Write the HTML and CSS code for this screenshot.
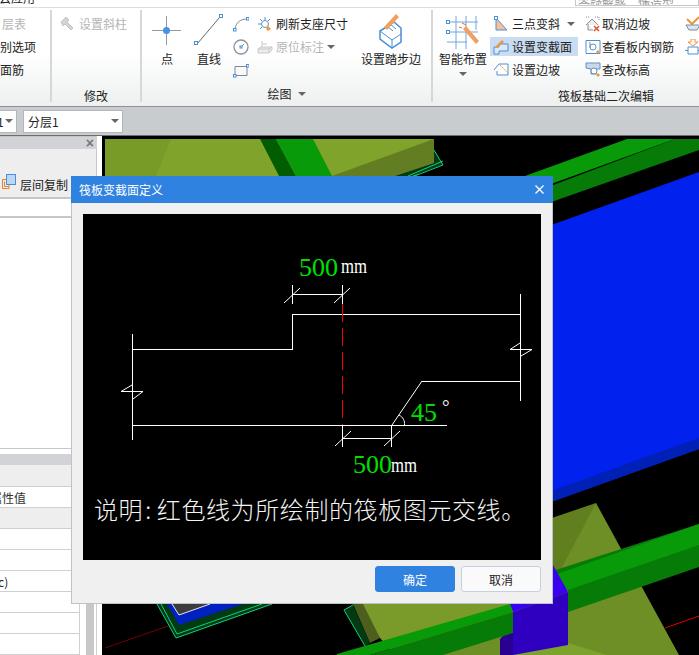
FILE: index.html
```html
<!DOCTYPE html>
<html lang="zh">
<head>
<meta charset="utf-8">
<title>筏板变截面定义</title>
<link rel="stylesheet" href="styles.css">
</head>
<body>
<div class="strip">
  <span class="app-name">云应用</span>
  <span class="search">答疑解惑，懂造型</span>
</div>

<div class="ribbon">
  <section class="group g1">
    <div class="rows">
      <div class="row off"><span>层表</span></div>
      <div class="row"><span class="cut">识别选项</span></div>
      <div class="row"><span>面筋</span></div>
    </div>
    <div class="cap">&nbsp;</div>
  </section>

  <section class="group g2">
    <div class="rows">
      <div class="row off">
        <svg class="ic" viewBox="0 0 16 16"><path d="M1 6 6 1l3 3-2 2 6 6-2 2-6-6-2 2z" fill="#d4d4d4" stroke="#c4c4c4"/></svg>
        <span>设置斜柱</span>
      </div>
    </div>
    <div class="cap">修改</div>
  </section>

  <section class="group g3">
    <div class="body">
      <div class="big b-point">
        <svg class="bigic" viewBox="0 0 30 38"><path d="M0 18.500h29M14.500 4v29" stroke="#8b9aa6" fill="none"/><circle cx="14.500" cy="18.500" r="3.500" fill="#4a90e2"/></svg>
        <span>点</span>
      </div>
      <div class="big b-line">
        <svg class="bigic" viewBox="0 0 30 38"><path d="M3.500 31.500 25.500 5.500" stroke="#5c6a75" fill="none"/><rect x="0.500" y="29.500" width="3" height="3" fill="#fff" stroke="#4a90d9"/><rect x="25.500" y="2.500" width="3" height="3" fill="#fff" stroke="#4a90d9"/></svg>
        <span>直线</span>
      </div>
      <div class="rows shapes">
        <div class="row"><svg class="ic" viewBox="0 0 16 16"><path d="M2 13C3 6 8 3 14 3" stroke="#7c8a96" fill="none"/><rect x="0.500" y="12.500" width="2.500" height="2.500" fill="#fff" stroke="#4a90d9"/><rect x="13.500" y="1.500" width="2.500" height="2.500" fill="#fff" stroke="#4a90d9"/></svg></div>
        <div class="row"><svg class="ic" viewBox="0 0 16 16"><circle cx="8" cy="8" r="7" fill="none" stroke="#8a949c" stroke-width="1.300"/><path d="M8 8 11 5" stroke="#8a949c"/><rect x="7" y="7" width="2" height="2" fill="#fff" stroke="#4a90d9"/></svg></div>
        <div class="row"><svg class="ic" viewBox="0 0 16 16"><path d="M2 4.500h12v9H2z" fill="none" stroke="#7c8a96"/><rect x="0.500" y="12.500" width="2.500" height="2.500" fill="#fff" stroke="#4a90d9"/><rect x="13.500" y="2.500" width="2.500" height="2.500" fill="#fff" stroke="#4a90d9"/></svg></div>
      </div>
      <div class="rows refresh">
        <div class="row"><svg class="ic" viewBox="0 0 16 16"><path d="M8 1v3M1 8h3M3 3l2 2M13 3l-2 2M3 13l2-2" stroke="#4a90d9" fill="none"/><circle cx="8" cy="8" r="3.500" fill="#fff" stroke="#6a8fb5"/><path d="M11 10l3 3-3 2-2-2z" fill="#f0953a"/></svg><span>刷新支座尺寸</span></div>
        <div class="row off"><svg class="ic" viewBox="0 0 16 16"><path d="M1 10l3-2h11v3l-3 3H1zM1 10h11v4M12 10l3-2M5 8V2M5 5h5" fill="#ececec" stroke="#c8c8c8"/></svg><span>原位标注</span><i class="tri"></i></div>
        <div class="row"></div>
      </div>
      <div class="big b-stair">
        <svg class="bigic" viewBox="0 0 30 38"><path d="M4 19 18 10l7 6v14l-9 6-12-9z" fill="#fff" stroke="#4a90d9" stroke-width="1.500"/><path d="M4 19l12 9v8M16 28l9-6M11 14l6 5M14 12l6 5" fill="none" stroke="#4a90d9"/><path d="M8 15 20 2l3 3-12 13z" fill="#f0a060"/></svg>
        <span>设置踏步边</span>
      </div>
    </div>
    <div class="cap cap-menu">绘图<i class="tri"></i></div>
  </section>

  <section class="group g4">
    <div class="body">
      <div class="big b-smart">
        <svg class="bigic" viewBox="0 0 34 38"><path d="M1 10h31M1 20h31M1 30h20M10 4v33M20 4v33M30 4v14" stroke="#6ea6e0" fill="none"/><rect x="0.500" y="8.500" width="3" height="3" fill="#fff" stroke="#4a90d9"/><rect x="0.500" y="18.500" width="3" height="3" fill="#fff" stroke="#4a90d9"/><path d="M17 17l3-3 13 15-3 3z" fill="#f0a060"/><path d="M16 11l4 2M13 15l3 1" stroke="#e0701f"/></svg>
        <span>智能布置</span>
        <i class="tri"></i>
      </div>
      <div class="rows edit">
        <div class="row"><svg class="ic" viewBox="0 0 16 16"><path d="M3 2v12h11z" fill="#f6c09a" stroke="#4a90d9"/><rect x="1.500" y="0.500" width="3" height="3" fill="#fff" stroke="#4a90d9"/></svg><span>三点变斜</span><i class="tri"></i></div>
        <div class="row sel"><svg class="ic" viewBox="0 0 16 16"><path d="M1 15V8h5V5h9v7H6v3z" fill="#dce8f5" stroke="#4a90d9"/><path d="M2 8 9 1l2 2-7 6z" fill="#f0953a"/></svg><span>设置变截面</span></div>
        <div class="row"><svg class="ic" viewBox="0 0 16 16"><path d="M1 8l5-6h9v11H4V9" fill="#fff" stroke="#4a90d9"/><path d="M7 3l8 8" stroke="#f0953a" stroke-dasharray="2 1"/></svg><span>设置边坡</span></div>
      </div>
      <div class="rows check">
        <div class="row"><svg class="ic" viewBox="0 0 16 16"><path d="M1 9l6-6 6 6M3 8v6h5" fill="#eee" stroke="#8a949c"/><path d="M1 1h3M10 1h4v3" stroke="#8a949c" stroke-dasharray="1 1" fill="none"/><path d="M9 10l5 5M14 10l-5 5" stroke="#e0533a" stroke-width="1.600"/></svg><span>取消边坡</span></div>
        <div class="row"><svg class="ic" viewBox="0 0 16 16"><path d="M1 1.500h14v13H1z" fill="#fff" stroke="#4a90d9"/><circle cx="8" cy="8" r="3" fill="none" stroke="#6a8fb5"/><path d="M5 3v6" stroke="#6a8fb5"/><path d="M13 11l2 2-2 2-2-2z" fill="#f0953a"/></svg><span>查看板内钢筋</span></div>
        <div class="row"><svg class="ic" viewBox="0 0 16 16"><path d="M1 1h14v6H11v5H6V7L1 6z" fill="#c9d9ea" stroke="#5f93c9"/><circle cx="9" cy="9" r="3" fill="#fff" stroke="#6a8fb5"/><path d="M13 11l2 2-2 2-2-2z" fill="#f0953a"/></svg><span>查改标高</span></div>
      </div>
      <div class="rows extra">
        <div class="row"><svg class="ic" viewBox="0 0 16 16"><path d="M2 3l5 5 7-7" fill="none" stroke="#f0953a" stroke-width="2"/><path d="M1 9h14l-3 5H4z" fill="#dde6f0" stroke="#7a8a9a"/></svg></div>
        <div class="row"><svg class="ic" viewBox="0 0 16 16"><path d="M6 0h4v3h3l-5 4-5-4h3z" fill="#fff" stroke="#f0953a"/><path d="M3 8h10v7H3zM0 11.500h3M13 11.500h3" fill="none" stroke="#4a90d9"/></svg></div>
        <div class="row"></div>
      </div>
    </div>
    <div class="cap">筏板基础二次编辑</div>
  </section>
</div>

<div class="toolbar">
  <div class="combo c-floor"><span>1</span><i class="tri"></i></div>
  <div class="combo c-layer"><span>分层1</span><i class="tri"></i></div>
</div>

<main class="main">
  <aside class="side">
    <div class="pane-head"><span class="x">×</span></div>
    <div class="tools">
      <svg class="copy" viewBox="0 0 16 16"><path d="M5 5.500H1.500v9H8V11M3.500 7.500v5H8" fill="none" stroke="#e8832a"/><rect x="5.500" y="0.500" width="9" height="10" fill="#bcd6f7" stroke="#4a90d9"/></svg>
      <span>层间复制</span>
    </div>
    <div class="tree-row"></div>
    <div class="tree-fill"></div>
    <div class="pane-head low"></div>
    <div class="prop shade"></div>
    <div class="prop"><span class="cut-prop">属性值</span></div>
    <div class="prop shade thin"></div>
    <div class="prop"></div>
    <div class="prop"></div>
    <div class="prop"><span class="cut-c">(c)</span></div>
    <div class="prop"></div>
    <div class="prop"></div>
    <div class="prop"></div>
    <div class="scroll"></div>
  </aside>

  <div class="canvas">
    <svg class="scene" viewBox="102 136 597 519" preserveAspectRatio="none">
      <rect x="102" y="136" width="597" height="519" fill="#000"/>
      <path d="M105 139H434V163L395 190H105z" fill="#80a32c"/>
      <path d="M105 139H171L156 176V200H105z" fill="#789b28"/>
      <path d="M332 176 434 139V163L395 176z" fill="#627d22"/>
      <path d="M260 139H276L296 176H279z" fill="#025c02"/>
      <path d="M276 139H313L332 176H296z" fill="#089a08"/>
      <path d="M395 176 434 163 434 150 443 165 412 176z" fill="#023a12"/>
      <path d="M434 150 443 165 412 177" fill="none" stroke="#10d080"/>
      <path d="M443 161 408 176" fill="none" stroke="#10d080"/>

      <path d="M675 139H699V150L540 206V190z" fill="#077b07"/>
      <path d="M627 139H675L540 188 525 176z" fill="#089a08"/>

      <path d="M540 229 699 172V449L540 506z" fill="#0021ee"/>
      <path d="M540 495 699 438V449L540 506z" fill="#0020b6"/>

      <path d="M596 503 679 655H440L500 604 540 540z" fill="#6e8f25"/>
      <path d="M596 503 540 522V590L557 577z" fill="#627f20"/>
      <path d="M568 643 607 655H510z" fill="#7da32c"/>
      <path d="M353 604H510L513 612 375 655H395L380 638z" fill="#7a9a2a"/>
      <path d="M353 604H363L380 638 370 643z" fill="#4e5e1e"/>
      <path d="M344 610 353 605 370 643 365 646z" fill="#023a12"/>
      <path d="M353 605 344 610 365 646" fill="none" stroke="#10d080"/>
      <path d="M665 628 699 616" stroke="#e00000" fill="none"/>

      <path d="M699 524V567L568 612V590L540 580V575z" fill="#077b07"/>
      <path d="M699 524V545L568 590 553 578 560 573z" fill="#089a08"/>

      <path d="M510 604 553 565 568 592 513 612z" fill="#3a00f0"/>
      <path d="M513 612 568 592V645L513 655z" fill="#3000c0"/>
      <path d="M500 639 513 625V655H500z" fill="#2a0090"/>

      <path d="M337 654 510 604 513 612 370 655H337z" fill="#089a08"/>
      <path d="M370 655 513 612V633L443 655z" fill="#077b07"/>

      <path d="M157 604 176 638 272 604z" fill="#023a12"/>
      <path d="M157 604 176 638 272 604" fill="none" stroke="#10d080"/>
      <path d="M161 604 177 634 262 604" fill="none" stroke="#10d080"/>
      <path d="M167 604 179 625 243 604z" fill="#0020c0"/>
      <path d="M172 604 179 615 210 604z" fill="#3c3c3c"/>
      <path d="M172 604 179 615 210 604" fill="none" stroke="#e8e8e8"/>
      <path d="M105 648 168 626" stroke="#780000" fill="none"/>
    </svg>
  </div>
</main>

<div class="dialog">
  <header class="dlg-title">
    <span>筏板变截面定义</span>
    <svg class="dlg-x" viewBox="0 0 9 9"><path d="M.5.500l8 8M8.500.500l-8 8" stroke="#fff" stroke-width="1.300" fill="none"/></svg>
  </header>
  <div class="dlg-body">
    <svg class="drawing" viewBox="83 214 458 346">
      <rect x="83" y="214" width="458" height="346" fill="#000"/>
      <g fill="none" stroke="#fff" shape-rendering="crispEdges">
        <path d="M132.500 334V440M132.500 349.500H292.500V314.500H520.500M520.500 294V401M422 381.500H520.500M132 425.500H447"/>
        <path d="M292.500 285V304M342.500 285V304M292 294.500H342"/>
        <path d="M342.500 425V447M391.500 425V447M342 438.500H392"/>
      </g>
      <g fill="none" stroke="#fff">
        <path d="M284 303 300 288M334 303 350 288M335 446 351 431M384 446 400 431"/>
        <path d="M422 381 392 425"/>
        <path d="M121 391.500H143L133 399M121 391.500 132 385M510 349.500H532L521 356M510 349.500 520 343"/>
        <path d="M399 415C403 417 405 421 404.500 425"/>
      </g>
      <path d="M342.500 304V425" stroke="#f00" stroke-dasharray="18 6" fill="none" shape-rendering="crispEdges"/>
      <text class="dim" x="299" y="276">500</text>
      <text class="unit" x="341" y="273" textLength="26" lengthAdjust="spacingAndGlyphs">mm</text>
      <text class="dim" x="411" y="421">45</text>
      <text class="deg" x="442" y="413">°</text>
      <text class="dim" x="353" y="473">500</text>
      <text class="unit" x="391" y="472" textLength="26" lengthAdjust="spacingAndGlyphs">mm</text>
      <text class="note" x="94" y="519">说明<tspan dx="2">:</tspan><tspan dx="5">红色线为所绘制的筏板图元交线。</tspan></text>
    </svg>
    <div class="dlg-foot">
      <button class="btn ok" type="button">确定</button>
      <button class="btn cancel" type="button">取消</button>
    </div>
  </div>
</div>
</body>
</html>
```
FILE: styles.css
```css
* { box-sizing: border-box; }
html, body { margin: 0; height: 100%; }
body {
  position: relative;
  width: 699px;
  height: 655px;
  overflow: hidden;
  background: #fff;
  color: #222;
  font: 12px/17px "Noto Sans CJK SC", "Liberation Sans", sans-serif;
  display: flex;
  flex-direction: column;
}

/* top strip */
.strip {
  height: 8px;
  flex: none;
  display: flex;
  justify-content: space-between;
  overflow: hidden;
  background: #fff;
  border-bottom: 1px solid #dcdcdc;
}
.app-name { margin: -8px 0 0 -1px; line-height: 12px; }
.search {
  width: 124px;
  height: 6px;
  border: 1px solid #c8c8c8;
  border-top: 0;
  color: #999;
  line-height: 5px;
  padding-left: 2px;
  overflow: hidden;
}

/* ribbon */
.ribbon {
  height: 99px;
  flex: none;
  display: flex;
  overflow: hidden;
  background: linear-gradient(#fff 0, #fff 45%, #eef0f0 100%);
  border-bottom: 1px solid #8f9295;
}
.group {
  flex: none;
  display: flex;
  flex-direction: column;
  border-right: 2px solid #d6d8d8;
  margin: 2px 0 4px;
}
.g1 { width: 52px; }
.g2 { width: 90px; }
.g3 { width: 291px; }
.g4 { width: 346px; border-right: 0; }
.body { display: flex; height: 77px; }
.rows {
  height: 77px;
  flex: none;
  display: flex;
  flex-direction: column;
  gap: 4px;
  padding-top: 4px;
}
.row {
  height: 19px;
  display: flex;
  align-items: center;
  gap: 3px;
  white-space: nowrap;
}
.row.off { color: #b4b4b4; }
.row.sel { background: #c9dcf2; }
.cut { margin-left: -12px; }
.g1 .row.off span { margin-left: 2px; }
.g2 .rows { padding-left: 8px; gap: 0; }
.ic { width: 16px; height: 16px; flex: none; }
.cap {
  height: 17px;
  text-align: center;
  color: #222;
}
.cap-menu { display: flex; justify-content: center; align-items: center; gap: 6px; margin-top: -2px; }
.tri {
  width: 0;
  height: 0;
  flex: none;
  border: 4px solid transparent;
  border-top: 4px solid #666;
  border-bottom: 0;
}

/* big buttons */
.big {
  flex: none;
  display: flex;
  flex-direction: column;
  align-items: center;
  padding-top: 2px;
  white-space: nowrap;
}
.bigic { width: 30px; height: 38px; }
.b-point { width: 50px; }
.b-line { width: 34px; }
.b-stair { width: 82px; }
.b-smart { width: 57px; padding-left: 3px; }
.b-smart .bigic { width: 34px; }
.b-smart .tri { margin-top: 5px; }

.shapes { width: 31px; padding-left: 7px; }
.refresh { width: 93px; }
.edit { width: 88px; margin-right: 5px; }
.edit .row { padding-left: 3px; }
.edit .tri { margin-left: 4px; }
.check { width: 102px; }
.check .row { gap: 1px; padding-left: 2px; }
.extra { width: 18px; }

/* toolbar */
.toolbar {
  height: 29px;
  flex: none;
  display: flex;
  gap: 6px;
  align-items: center;
  background: #c9cccf;
  border-bottom: 1px solid #6c6e70;
}
.combo {
  height: 23px;
  background: #fff;
  border: 1px solid #b4b6b8;
  display: flex;
  align-items: center;
  justify-content: space-between;
  padding-right: 3px;
  line-height: 21px;
}
.c-floor { width: 17px; border-left: 0; overflow: hidden; }
.c-floor span { margin-left: -3px; }
.c-layer { width: 100px; padding-left: 4px; }

/* main */
.main { flex: 1; display: flex; min-height: 0; }
.side {
  width: 102px;
  flex: none;
  position: relative;
  overflow: hidden;
  background: #fff;
  border-right: 5px solid #fff;
  display: flex;
  flex-direction: column;
}
.pane-head {
  height: 13px;
  flex: none;
  background: #d2d3d7;
  border-top: 1px solid #c4c5c8;
  display: flex;
  justify-content: flex-end;
  align-items: center;
  padding-right: 3px;
  color: #777;
  font: bold 14px/11px "Liberation Sans", sans-serif;
}
.pane-head.low { height: 11px; margin-top: 5px; border-top: 0; }
.tools {
  height: 50px;
  flex: none;
  display: flex;
  align-items: center;
  gap: 3px;
  padding: 22px 0 0 1px;
  background: #eee;
  border-right: 1px solid #c8c8c8;
  border-bottom: 2px solid #c6c6c8;
}
.copy { width: 16px; height: 16px; flex: none; margin-top: -5px; }
.tree-row { height: 19px; flex: none; border-bottom: 2px solid #c6c6c8; }
.tree-fill { flex: 1; min-height: 0; border-bottom: 1px solid #c6c6c8; }
.prop {
  height: 21px;
  width: 80px;
  flex: none;
  border-bottom: 1px solid #d0d0d2;
  border-right: 1px solid #d0d0d2;
  display: flex;
  align-items: center;
  background: #fff;
  overflow: hidden;
}
.prop.shade { background: #eee; height: 22px; }
.prop.shade.thin { height: 21px; }
.cut-prop { margin-left: -10px; color: #333; }
.cut-c { margin-left: -6px; }
.scroll {
  position: absolute;
  left: 86px;
  bottom: 0;
  width: 8px;
  height: 200px;
  background: #c8c8c8;
  box-shadow: 2px 0 0 #fff, 3px 0 0 #d0d0d2;
}
.canvas { flex: 1; min-width: 0; background: #000; }
.scene { display: block; width: 100%; height: 100%; }

/* dialog */
.dialog {
  position: absolute;
  left: 71px;
  top: 176px;
  width: 482px;
  height: 428px;
  background: #f0f0f0;
  border: 1px solid #bcc3cd;
  border-top: 0;
  display: flex;
  flex-direction: column;
}
.dlg-title {
  height: 27px;
  margin: 0 -1px;
  flex: none;
  background: #2f82e0;
  color: #fff;
  display: flex;
  align-items: center;
  justify-content: space-between;
  padding: 0 9px 0 8px;
}
.dlg-x { width: 9px; height: 9px; }
.dlg-body { padding: 11px 11px 0; flex: 1; }
.drawing { display: block; width: 458px; height: 346px; }
.dim { font: 26px "Liberation Serif", serif; fill: #00e000; }
.unit { font: 22px "Liberation Serif", serif; fill: #fff; }
.deg { font: 19px "Liberation Serif", serif; fill: #fff; }
.note { font: 300 24px "Noto Sans CJK SC", sans-serif; fill: #f4f4f4; letter-spacing: 0.6px; }
.dlg-foot { display: flex; justify-content: flex-end; gap: 6px; margin-top: 6px; }
.btn {
  width: 80px;
  height: 26px;
  border-radius: 3px;
  font: 12px "Noto Sans CJK SC", sans-serif;
  padding: 0;
}
.ok { background: #2f82e0; border: 1px solid #2f82e0; color: #fff; }
.cancel { background: #fafafa; border: 1px solid #c4cfe0; color: #222; }
```
